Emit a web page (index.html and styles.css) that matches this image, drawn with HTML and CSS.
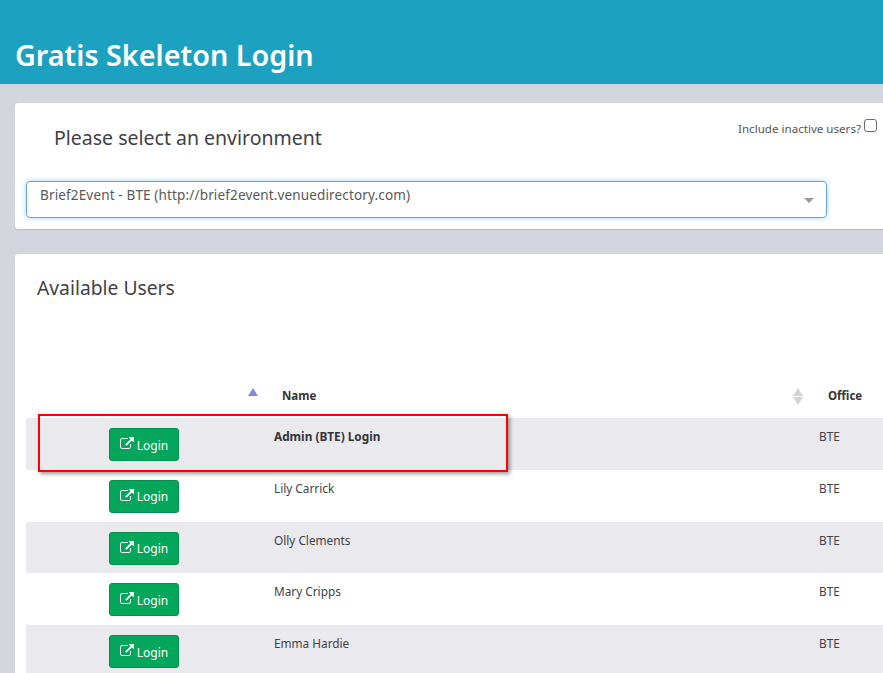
FILE: index.html
```html
<!DOCTYPE html>
<html lang="en">
<head>
<meta charset="utf-8">
<title>Gratis Skeleton Login</title>
<link rel="stylesheet" href="styles.css">
</head>
<body>
<header class="top"><h1>Gratis Skeleton Login</h1></header>
<main class="content">
  <section class="card env">
    <div class="env-head">
      <h2>Please select an environment</h2>
      <label class="inactive">Include inactive users?<input type="checkbox"></label>
    </div>
    <div class="select"><span>Brief2Event - BTE (http://brief2event.venuedirectory.com)</span><i class="caret"></i></div>
  </section>
  <section class="card users">
    <h3>Available Users</h3>
    <div class="table-wrap">
      <table>
        <colgroup><col class="c1"><col class="c2"><col class="c3"></colgroup>
        <thead>
          <tr>
            <th><span class="sort only-up"></span></th>
            <th>Name<span class="sort"></span></th>
            <th class="office">Office</th>
          </tr>
        </thead>
        <tbody>
          <tr><td class="act"><a class="btn"><svg viewBox="0 0 1792 1792"><use href="#ext"/></svg>Login</a></td><td class="strong">Admin (BTE) Login</td><td>BTE</td></tr>
          <tr><td class="act"><a class="btn"><svg viewBox="0 0 1792 1792"><use href="#ext"/></svg>Login</a></td><td>Lily Carrick</td><td>BTE</td></tr>
          <tr><td class="act"><a class="btn"><svg viewBox="0 0 1792 1792"><use href="#ext"/></svg>Login</a></td><td>Olly Clements</td><td>BTE</td></tr>
          <tr><td class="act"><a class="btn"><svg viewBox="0 0 1792 1792"><use href="#ext"/></svg>Login</a></td><td>Mary Cripps</td><td>BTE</td></tr>
          <tr><td class="act"><a class="btn"><svg viewBox="0 0 1792 1792"><use href="#ext"/></svg>Login</a></td><td>Emma Hardie</td><td>BTE</td></tr>
        </tbody>
      </table>
      <div class="highlight"></div>
    </div>
  </section>
</main>
<svg class="defs" width="0" height="0"><symbol id="ext" viewBox="0 0 1792 1792"><path fill="currentColor" d="M1408 928v320q0 119-84.5 203.5t-203.5 84.5h-832q-119 0-203.5-84.5t-84.5-203.5v-832q0-119 84.5-203.5t203.5-84.5h704q14 0 23 9t9 23v64q0 14-9 23t-23 9h-704q-66 0-113 47t-47 113v832q0 66 47 113t113 47h832q66 0 113-47t47-113v-320q0-14 9-23t23-9h64q14 0 23 9t9 23zm384-864v512q0 26-19 45t-45 19-45-19l-176-176-652 652q-10 10-23 10t-23-10l-114-114q-10-10-10-23t10-23l652-652-176-176q-19-19-19-45t19-45 45-19h512q26 0 45 19t19 45z"/></symbol></svg>
</body>
</html>
```
FILE: styles.css
```css
* { box-sizing: border-box; }
html, body { height: 100%; }
body {
  margin: 0;
  width: 883px;
  height: 673px;
  overflow: hidden;
  background: #d2d6dc;
  font-family: "Noto Sans", "Open Sans", sans-serif;
  color: #3d3d45;
  font-size: 12.5px;
}
.top {
  height: 84px;
  background: #1ca1c1;
  padding: 37px 15px 0;
}
.top h1 {
  margin: 0;
  color: #fff;
  font-size: 28.75px;
  line-height: 36px;
  font-weight: 600;
}
.content { padding: 19px 0 0 15px; width: 1000px; }
.card {
  background: #fff;
  border-radius: 3px;
  box-shadow: 0 1px 1px rgba(0,0,0,.12);
}
.env { height: 126px; padding: 0 11px; margin-bottom: 25px; }
.env-head { display: flex; height: 78px; width: 851px; }
.env-head h2 {
  margin: 21px 0 0 28px;
  flex: 1;
  font-size: 19.5px;
  line-height: 28px;
  font-weight: 400;
  color: #3f3f46;
}
.inactive {
  margin-top: 16px;
  display: flex;
  align-items: flex-start;
  font-size: 11.6px;
  line-height: 20px;
  color: #555;
  height: 20px;
}
.inactive input {
  appearance: none;
  width: 13px;
  height: 13px;
  margin: 0 0 0 3px;
  border: 1px solid #6b6b6b;
  border-radius: 3px;
  background: #fff;
}
.select {
  width: 801px;
  height: 37px;
  border: 1px solid #66a6e0;
  border-radius: 4px;
  box-shadow: 0 0 5px rgba(102,175,233,.6);
  display: flex;
  justify-content: space-between;
  padding: 3px 12px 0 13px;
  font-size: 13.5px;
  letter-spacing: .15px;
  line-height: 20px;
  color: #595959;
}
.caret {
  margin-top: 13px;
  width: 0;
  height: 0;
  border-left: 5px solid transparent;
  border-right: 5px solid transparent;
  border-top: 5px solid #9a9a9a;
}
.users { height: 500px; padding: 0 11px; }
.users h3 {
  margin: 0;
  padding: 19px 0 0 11px;
  font-size: 19.3px;
  line-height: 30px;
  font-weight: 400;
  color: #3f3f46;
}
.table-wrap { position: relative; margin-top: 77px; width: 960px; }
table { border-collapse: collapse; table-layout: fixed; width: 960px; }
.c1 { width: 236px; }
.c2 { width: 545px; }
th {
  position: relative;
  height: 38px;
  padding: 6px 0 0 20px;
  text-align: left;
  vertical-align: top;
  font-size: 11.5px;
  line-height: 20px;
  font-weight: 700;
  color: #333339;
}
th.office { padding-left: 21px; }
tbody tr { height: 51.8px; }
tbody tr:nth-child(odd) { background: #e9e9ee; }
td {
  padding: 9px 12px 0;
  vertical-align: top;
  line-height: 18px;
  font-size: 11.8px;
  color: #41414a;
}
td.strong { font-weight: 700; color: #33333a; }
td.act { padding: 10px 0 0 83px; }
.btn {
  display: flex;
  align-items: center;
  justify-content: center;
  gap: 3px;
  width: 70px;
  height: 33px;
  padding-top: 2px;
  background: #04a65b;
  border: 1px solid #03914f;
  border-radius: 3px;
  color: #fff;
  font-size: 12px;
}
.btn svg { width: 14px; height: 14px; color: #fff; margin-top: -3px; }
.sort {
  position: absolute;
  right: 4px;
  top: 8px;
  width: 10px;
  height: 17px;
}
.sort::before, .sort::after {
  content: "";
  position: absolute;
  left: 0;
  border-left: 5px solid transparent;
  border-right: 5px solid transparent;
}
.sort::before { top: 0; border-bottom: 8px solid #d3d3d8; }
.sort::after { bottom: 0; border-top: 8px solid #d3d3d8; }
.sort.only-up::before { border-bottom-color: #8888d8; }
.sort.only-up::after { display: none; }
.highlight {
  position: absolute;
  left: 12px;
  top: 34px;
  width: 470px;
  height: 58px;
  border: 2px solid #f00;
  box-shadow: 2px 2px 4px rgba(0,0,0,.4);
  pointer-events: none;
}
.defs { position: absolute; }
```
